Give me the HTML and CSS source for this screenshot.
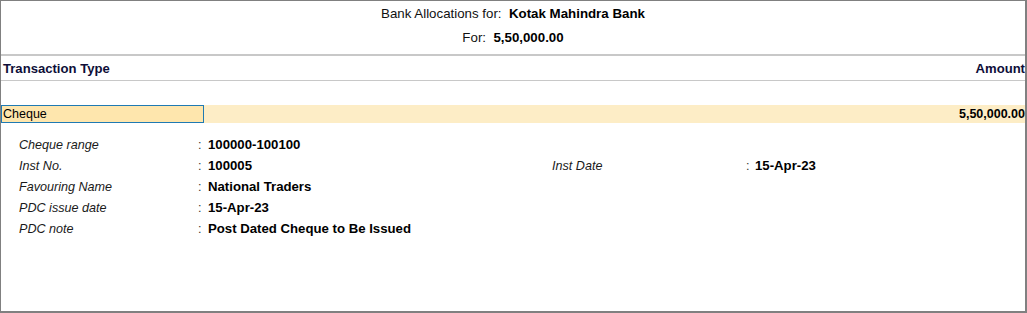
FILE: index.html
```html
<!DOCTYPE html>
<html>
<head>
<meta charset="utf-8">
<link rel="stylesheet" href="styles.css">
</head>
<body>
<div class="frame">
  <header class="title">
    <div class="title-line">Bank Allocations for:&nbsp; <b>Kotak Mahindra Bank</b></div>
    <div class="title-line">For:&nbsp; <b>5,50,000.00</b></div>
  </header>
  <div class="colhead">
    <span>Transaction Type</span>
    <span>Amount</span>
  </div>
  <div class="spacer"></div>
  <div class="txrow">
    <span class="txtype">Cheque</span>
    <span class="txamt">5,50,000.00</span>
  </div>
  <div class="details">
    <span class="lbl">Cheque range</span><span class="colon">:</span><span class="val">100000-100100</span><span></span><span></span><span></span>
    <span class="lbl">Inst No.</span><span class="colon">:</span><span class="val">100005</span><span class="lbl">Inst Date</span><span class="colon">:</span><span class="val">15-Apr-23</span>
    <span class="lbl">Favouring Name</span><span class="colon">:</span><span class="val">National Traders</span><span></span><span></span><span></span>
    <span class="lbl">PDC issue date</span><span class="colon">:</span><span class="val">15-Apr-23</span><span></span><span></span><span></span>
    <span class="lbl">PDC note</span><span class="colon">:</span><span class="val">Post Dated Cheque to Be Issued</span><span></span><span></span><span></span>
  </div>
</div>
</body>
</html>
```
FILE: styles.css
```css
html, body {
  margin: 0;
  padding: 0;
  background: #ffffff;
}
body {
  font-family: "Liberation Sans", Arial, sans-serif;
  font-size: 12.5px;
  color: #000;
}
.frame {
  box-sizing: border-box;
  width: 1027px;
  height: 313px;
  border-style: solid;
  border-color: #808080;
  border-width: 1px 2px 2px 1px;
  display: flex;
  flex-direction: column;
  overflow: hidden;
}
.title {
  box-sizing: border-box;
  height: 55px;
  padding-top: 3px;
  border-bottom: 2px solid #c8c8c8;
  display: flex;
  flex-direction: column;
  align-items: center;
  row-gap: 4px;
  font-size: 13.3px;
  color: #111;
}
.title-line {
  line-height: 20px;
  height: 20px;
}
.title-line b {
  color: #000;
}
.colhead {
  box-sizing: border-box;
  height: 25px;
  border-bottom: 1px solid #c8c8c8;
  display: flex;
  justify-content: space-between;
  align-items: center;
  padding: 0 0 0 2px;
  font-weight: bold;
  font-size: 13.1px;
  color: #0e0e38;
}
.spacer {
  height: 24px;
}
.txrow {
  height: 18px;
  background: #fdedc6;
  display: flex;
  justify-content: space-between;
  align-items: stretch;
}
.txtype {
  box-sizing: border-box;
  width: 203px;
  border: 1px solid #1f7ab3;
  background: #fee6ad;
  padding-left: 1px;
  line-height: 16px;
}
.txamt {
  font-weight: bold;
  line-height: 18px;
}
.details {
  display: grid;
  grid-template-columns: 179px 10px 344px 194px 9px 1fr;
  grid-auto-rows: 21px;
  align-items: center;
  padding: 11px 0 0 18px;
}
.lbl {
  font-style: italic;
  font-size: 12.6px;
  color: #1a1a1a;
}
.colon {
  color: #333;
}
.val {
  font-weight: bold;
  font-size: 13.2px;
}
```
